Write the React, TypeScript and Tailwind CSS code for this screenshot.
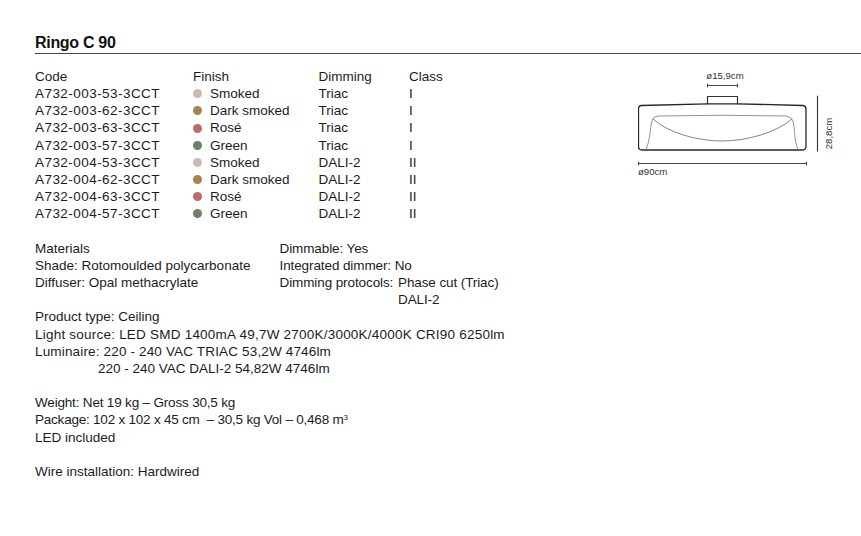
import React from 'react';

const rows = [
  { code: 'A732-003-53-3CCT', finish: 'Smoked', dot: 'bg-[#c9bbb0]', dimming: 'Triac', cls: 'I' },
  { code: 'A732-003-62-3CCT', finish: 'Dark smoked', dot: 'bg-[#a5854c]', dimming: 'Triac', cls: 'I' },
  { code: 'A732-003-63-3CCT', finish: 'Rosé', dot: 'bg-[#c0686a]', dimming: 'Triac', cls: 'I' },
  { code: 'A732-003-57-3CCT', finish: 'Green', dot: 'bg-[#6b8263]', dimming: 'Triac', cls: 'I' },
  { code: 'A732-004-53-3CCT', finish: 'Smoked', dot: 'bg-[#c9bbb0]', dimming: 'DALI-2', cls: 'II' },
  { code: 'A732-004-62-3CCT', finish: 'Dark smoked', dot: 'bg-[#a5854c]', dimming: 'DALI-2', cls: 'II' },
  { code: 'A732-004-63-3CCT', finish: 'Rosé', dot: 'bg-[#c0686a]', dimming: 'DALI-2', cls: 'II' },
  { code: 'A732-004-57-3CCT', finish: 'Green', dot: 'bg-[#6b8263]', dimming: 'DALI-2', cls: 'II' },
];

const LampDrawing = () => (
  <svg width="200" height="125" viewBox="0 0 200 125" className="shrink-0">
    <g fontFamily="Liberation Sans, sans-serif" fontSize="9.600" fill="#333">
      <text x="87" y="18" textAnchor="middle">ø15,9cm</text>
      <text x="0" y="113.500">ø90cm</text>
      <text transform="translate(194 72.500) rotate(-90)" textAnchor="middle">28,8cm</text>
    </g>
    <g fill="none" stroke="#333" strokeLinecap="round">
      <path d="M69.500 24.500H99.500M69.500 23V26M99.500 23V26" strokeWidth="0.9" />
      <path d="M179.500 35V90" strokeWidth="1.1" />
      <path d="M0.500 102.500H168.500M0.500 101V104M168.500 101V104" strokeWidth="0.9" />
      <path d="M69.500 43V35.500H99.500V43" strokeWidth="1.2" />
      <path d="M3 44.500L69.500 42.800H99.500L165 44.500Q168 44.800 168 48V85.500Q168 89 164 89H4Q0.500 89 0.500 85.500V48Q0.500 44.800 3 44.500Z" stroke="#262626" strokeWidth="1.300" />
      <path d="M8 88.500C12 80 12 68 14 60Q15 55.500 20 55Q84 53.500 148 55Q153 55.500 155 60C157 68 156 80 160 88.500" stroke="#777" strokeWidth="0.8" />
      <path d="M15 58C30 72 60 80 84 80C108 80 138 72 154 58" stroke="#666" strokeWidth="0.8" />
    </g>
  </svg>
);

export default function App() {
  return (
    <div className="w-[861px] h-[536px] overflow-hidden bg-white pt-[34px] pl-[35px] text-[13.5px] leading-[17.15px] text-[#1c1c1c] font-['Liberation_Sans',sans-serif]">
      <h1 className="text-[16px] leading-[18px] font-bold tracking-[-0.3px] text-[#111]">Ringo C 90</h1>
      <div className="mt-[1px] h-px bg-[#444]" />

      <div className="flex mt-[14px]">
        {/* Code table */}
        <div className="w-[603px] shrink-0">
          <div className="grid grid-cols-[158px_125.500px_90.500px_1fr]">
            <div>Code</div>
            <div>Finish</div>
            <div>Dimming</div>
            <div>Class</div>
            {rows.map((row) => (
              <React.Fragment key={row.code}>
                <div className="tracking-[0.45px]">{row.code}</div>
                <div className="flex items-center gap-[8px]">
                  <span className={`w-[9px] h-[9px] rounded-full ${row.dot}`} />
                  {row.finish}
                </div>
                <div>{row.dimming}</div>
                <div>{row.cls}</div>
              </React.Fragment>
            ))}
          </div>
        </div>
        <div className="-mt-[7px]">
          <LampDrawing />
        </div>
      </div>

      {/* Specs */}
      <div className="flex mt-[17.400px]">
        <div className="w-[244.500px]">
          <div>Materials</div>
          <div>Shade: Rotomoulded polycarbonate</div>
          <div>Diffuser: Opal methacrylate</div>
        </div>
        <div className="tracking-[-0.1px]">
          <div>Dimmable: Yes</div>
          <div>Integrated dimmer: No</div>
          <div className="flex">
            <span className="w-[118.500px]">Dimming protocols:</span>
            <div>
              <div>Phase cut (Triac)</div>
              <div>DALI-2</div>
            </div>
          </div>
        </div>
      </div>

      <div>Product type: Ceiling</div>
      <div className="tracking-[0.22px]">Light source: LED SMD 1400mA 49,7W 2700K/3000K/4000K CRI90 6250lm</div>
      <div className="tracking-[0.16px]">Luminaire: 220 - 240 VAC TRIAC 53,2W 4746lm</div>
      <div className="pl-[63px]">220 - 240 VAC DALI-2 54,82W 4746lm</div>

      <div className="mt-[17px] tracking-[-0.18px]">Weight: Net 19 kg – Gross 30,5 kg</div>
      <div className="tracking-[-0.22px]">
        Package: 102 x 102 x 45 cm &nbsp;– 30,5 kg Vol – 0,468 m<sup className="text-[8px]">3</sup>
      </div>
      <div className="mt-[0.500px]">LED included</div>

      <div className="mt-[16.500px]">Wire installation: Hardwired</div>
    </div>
  );
}
